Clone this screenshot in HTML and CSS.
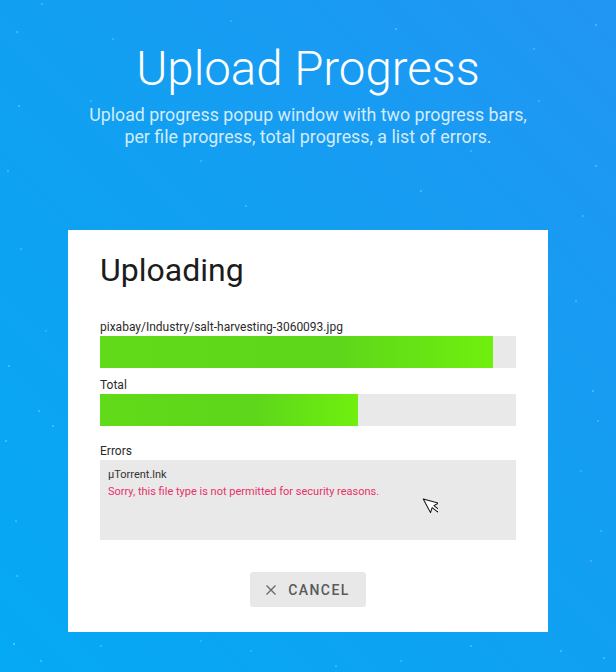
FILE: index.html
```html
<!DOCTYPE html>
<html lang="en">
<head>
<meta charset="utf-8">
<title>Upload Progress</title>
<link rel="stylesheet" href="styles.css">
</head>
<body>
<div class="stars"></div>
<header class="hero">
  <h1 class="hero-title">Upload Progress</h1>
  <p class="hero-sub">Upload progress popup window with two progress bars,<br>per file progress, total progress, a list of errors.</p>
</header>
<section class="dialog">
  <h2 class="dialog-title">Uploading</h2>
  <div class="group">
    <div class="label">pixabay/Industry/salt-harvesting-3060093.jpg</div>
    <div class="track"><div class="fill" style="width:94.5%"></div></div>
  </div>
  <div class="group">
    <div class="label">Total</div>
    <div class="track"><div class="fill" style="width:62%"></div></div>
  </div>
  <div class="group errors-group">
    <div class="label">Errors</div>
    <div class="errors">
      <div class="err-file">µTorrent.lnk</div>
      <div class="err-msg">Sorry, this file type is not permitted for security reasons.</div>
      <svg class="cursor" width="18" height="22" viewBox="0 0 18 22"><polygon points="1,1 1,16.5 4.8,12.8 7.6,19.2 10,18.2 7.3,11.9 12.5,11.9" fill="#fff" stroke="#111" stroke-width="1" stroke-linejoin="round" transform="rotate(-28 1 1) translate(2 1)"/></svg>
    </div>
  </div>
  <div class="actions">
    <button class="cancel"><svg class="x" width="10" height="10" viewBox="0 0 10 10"><path d="M0.5 0.5 L9.5 9.5 M9.5 0.5 L0.5 9.5" stroke="#666" stroke-width="1.3" fill="none"/></svg><span>CANCEL</span></button>
  </div>
</section>
</body>
</html>
```
FILE: styles.css
```css
html, body {
  margin: 0;
  padding: 0;
}
body {
  width: 616px;
  height: 672px;
  overflow: hidden;
  position: relative;
  font-family: Roboto, "Noto Sans", sans-serif;
  background: linear-gradient(225deg, #2296f3 0%, #129ff2 45%, #05a9f4 100%);
  display: flex;
  flex-direction: column;
  align-items: center;
}
.stars {
  position: absolute;
  left: 0;
  top: 0;
  width: 2px;
  height: 2px;
  border-radius: 50%;
  background: transparent;
  box-shadow:
    41px 3px rgba(255,255,255,.25), 16px 31px rgba(255,255,255,.3), 595px 24px rgba(255,255,255,.3),
    112px 38px rgba(255,255,255,.25), 230px 20px rgba(255,255,255,.2), 395px 28px rgba(255,255,255,.3),
    533px 48px rgba(255,255,255,.25), 470px 62px rgba(255,255,255,.3), 90px 100px rgba(255,255,255,.25),
    18px 105px rgba(255,255,255,.3), 538px 100px rgba(255,255,255,.25), 245px 205px rgba(255,255,255,.3),
    420px 190px rgba(255,255,255,.3), 470px 150px rgba(255,255,255,.25), 200px 160px rgba(255,255,255,.25),
    595px 165px rgba(255,255,255,.3), 7px 170px rgba(255,255,255,.25), 20px 248px rgba(255,255,255,.25),
    582px 215px rgba(255,255,255,.25), 45px 330px rgba(255,255,255,.2), 575px 300px rgba(255,255,255,.25),
    8px 365px rgba(255,255,255,.3), 592px 390px rgba(255,255,255,.3), 38px 410px rgba(255,255,255,.3),
    5px 440px rgba(255,255,255,.35), 52px 425px rgba(255,255,255,.3), 597px 420px rgba(255,255,255,.25),
    580px 470px rgba(255,255,255,.2), 15px 520px rgba(255,255,255,.25), 600px 530px rgba(255,255,255,.25),
    16px 575px rgba(255,255,255,.3), 590px 560px rgba(255,255,255,.25), 13px 643px rgba(255,255,255,.4),
    40px 660px rgba(255,255,255,.3), 100px 645px rgba(255,255,255,.25), 250px 650px rgba(255,255,255,.2),
    400px 660px rgba(255,255,255,.25), 560px 650px rgba(255,255,255,.3), 603px 657px rgba(255,255,255,.3),
    200px 640px rgba(255,255,255,.2), 470px 645px rgba(255,255,255,.25), 335px 665px rgba(255,255,255,.25);
}
.hero {
  text-align: center;
  padding-top: 41px;
  color: #fff;
  position: relative;
}
.hero-title {
  margin: 0;
  font-size: 47.4px;
  font-weight: 300;
  line-height: 56px;
}
.hero-sub {
  margin: 7px 0 0;
  font-size: 17.8px;
  font-weight: 400;
  line-height: 21.5px;
  color: rgba(255,255,255,0.82);
}
.dialog {
  position: relative;
  margin-top: 83px;
  width: 480px;
  box-sizing: border-box;
  background: #fff;
  padding: 20px 32px 25px;
  display: flex;
  flex-direction: column;
}
.dialog-title {
  margin: 0 0 29px;
  font-size: 32px;
  font-weight: 400;
  line-height: 40px;
  color: #1c1c1c;
}
.group {
  display: flex;
  flex-direction: column;
}
.group + .group {
  margin-top: 9px;
}
.group.errors-group {
  margin-top: 17px;
}
.label {
  font-size: 12px;
  line-height: 17px;
  color: #2a2a2a;
}
.track {
  height: 32px;
  background: #e9e9e9;
}
.fill {
  height: 100%;
  background: linear-gradient(90deg, #61da19 0%, #5dd61b 60%, #6ff00e 100%);
}
.errors {
  position: relative;
  height: 80px;
  box-sizing: border-box;
  background: #e9e9e9;
  padding: 6px 8px;
  font-size: 11px;
  line-height: 17px;
}
.err-file {
  color: #333;
}
.err-msg {
  color: #e8316a;
}
.cursor {
  position: absolute;
  left: 320px;
  top: 38px;
}
.actions {
  display: flex;
  justify-content: center;
  margin-top: 32px;
}
.cancel {
  display: flex;
  align-items: center;
  gap: 12px;
  height: 35px;
  padding: 0 16px;
  border: none;
  border-radius: 3px;
  background: #e8e8e8;
  font-family: Roboto, sans-serif;
  font-size: 14px;
  font-weight: 500;
  letter-spacing: 1.4px;
  color: #5a5a5a;
}
.cancel span {
  line-height: 16px;
}
```
